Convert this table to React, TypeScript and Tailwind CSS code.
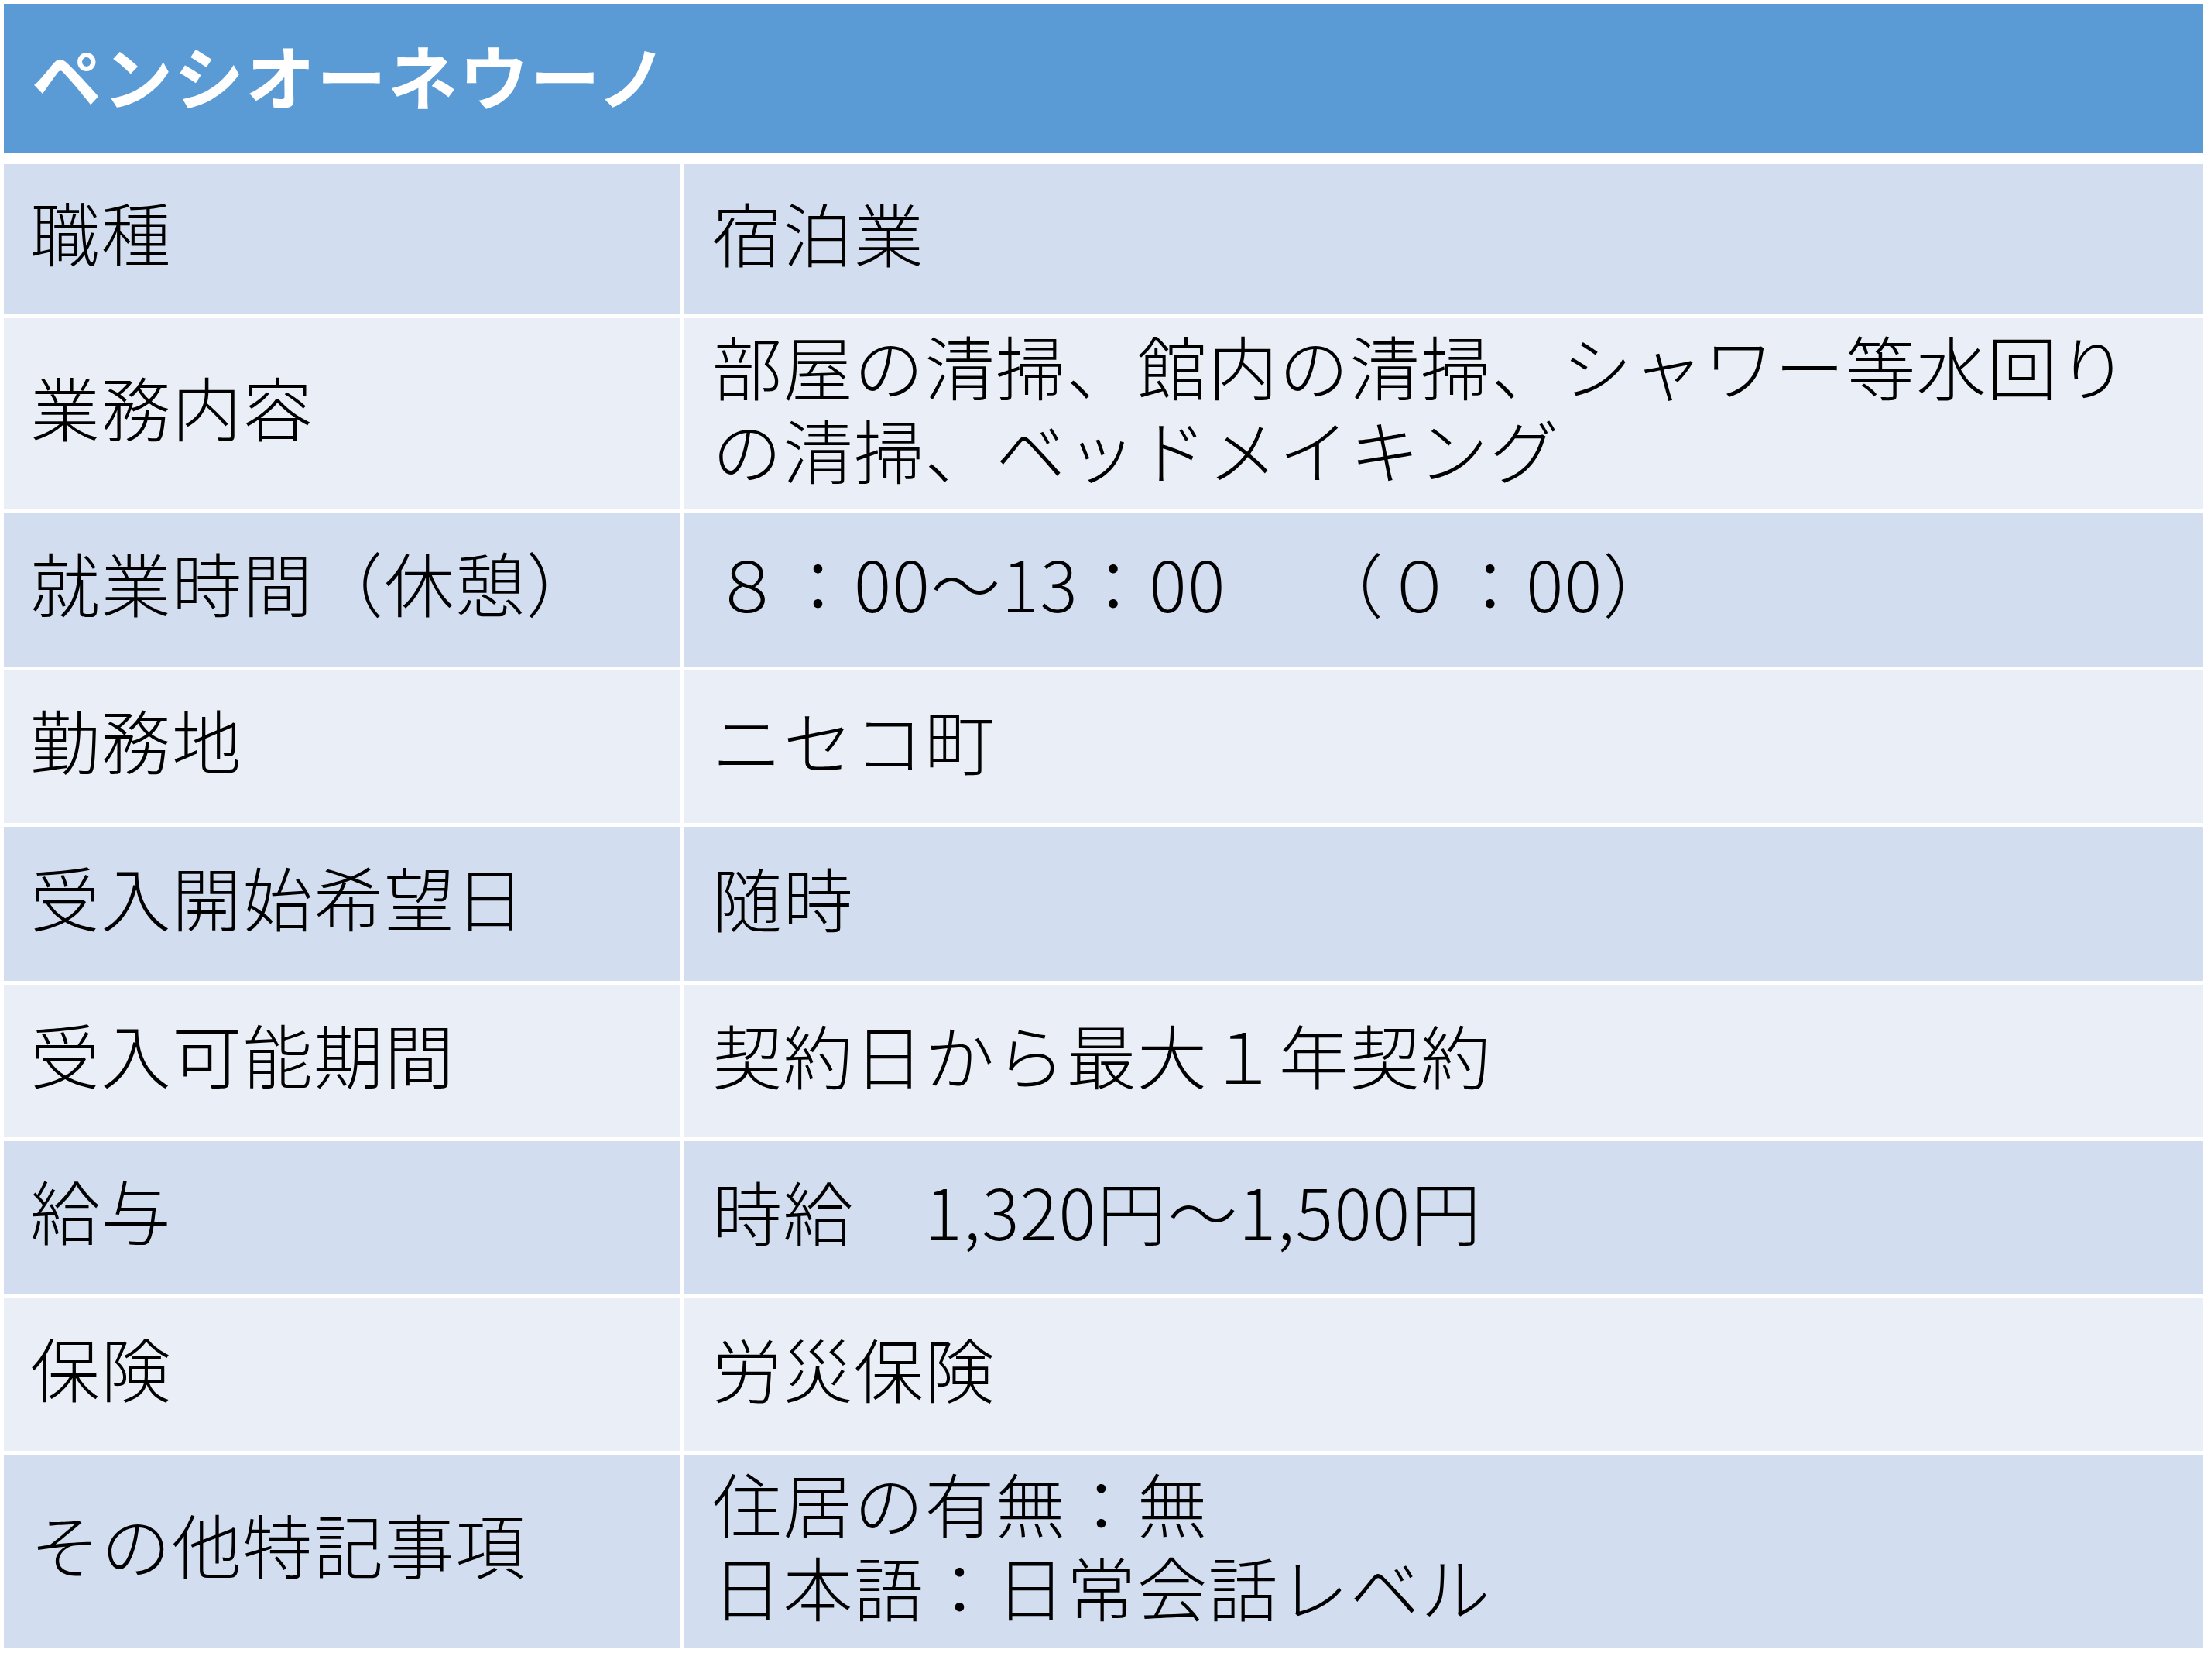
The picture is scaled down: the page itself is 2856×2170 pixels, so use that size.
import React from "react";

const rows = [
  { label: "職種", value: ["宿泊業"], h: "h-[194px]" },
  {
    label: "業務内容",
    value: ["部屋の清掃、館内の清掃、シャワー等水回り", "の清掃、ベッドメイキング"],
    h: "h-[247px]",
  },
  { label: "就業時間（休憩）", value: ["８：00～13：00　 （０：00）"], h: "h-[198px]" },
  { label: "勤務地", value: ["ニセコ町"], h: "h-[197px]" },
  { label: "受入開始希望日", value: ["随時"], h: "h-[199px]" },
  { label: "受入可能期間", value: ["契約日から最大１年契約"], h: "h-[197px]" },
  { label: "給与", value: ["時給　1,320円～1,500円"], h: "h-[198px]" },
  { label: "保険", value: ["労災保険"], h: "h-[197px]" },
  { label: "その他特記事項", value: ["住居の有無：無", "日本語：日常会話レベル"], h: "h-[250px]" },
];

export default function App() {
  return (
    <div
      className="w-[2856px] h-[2170px] bg-white pt-[5px] pl-[5px] pr-[10px]"
      style={{ fontFamily: '"Noto Sans CJK JP", "Noto Sans", sans-serif' }}
    >
      {/* Title bar */}
      <div className="h-[193px] bg-[#5B9BD5] flex items-center pl-[36px] pb-[12px] text-white font-bold text-[90px] leading-[1.2] tracking-[2px]">
        ペンシオーネウーノ
      </div>

      {/* Table */}
      <div className="mt-[14px] grid grid-cols-[874px_1fr] gap-[5px]">
        {rows.map((row, i) => {
          const bg = i % 2 === 0 ? "bg-[#D2DEEF]" : "bg-[#EAEFF7]";
          return (
            <React.Fragment key={row.label}>
              <div
                className={`${row.h} ${bg} flex items-center pl-[34px] pb-[22px] text-black font-light text-[90px] leading-[1.2] tracking-[1.5px]`}
              >
                {row.label}
              </div>
              <div
                className={`${row.h} ${bg} flex flex-col justify-center pl-[36px] pb-[20px] text-black font-light text-[90px] leading-[1.2] tracking-[1.5px]`}
              >
                {row.value.map((line) => (
                  <div key={line} className="whitespace-pre">
                    {line}
                  </div>
                ))}
              </div>
            </React.Fragment>
          );
        })}
      </div>
    </div>
  );
}
